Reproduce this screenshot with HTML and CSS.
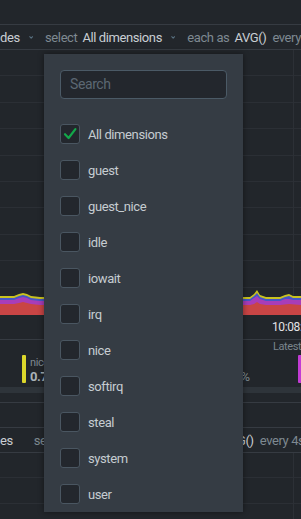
FILE: index.html
```html
<!DOCTYPE html>
<html>
<head>
<meta charset="utf-8">
<link rel="stylesheet" href="styles.css">
</head>
<body>
<div class="page">
  <section class="card">
    <div class="card-head"></div>
    <div class="toolbar">
      <div class="tb-inner">
        <span class="val">des</span>
        <svg class="chev" viewBox="0 0 9 7" width="9" height="7"><path d="M1.5 1.8 L4.5 5 L7.5 1.8" /></svg>
        <span class="kw kw-sel">select</span>
        <span class="val">All dimensions</span>
        <svg class="chev" viewBox="0 0 9 7" width="9" height="7"><path d="M1.5 1.8 L4.5 5 L7.5 1.8" /></svg>
        <span class="kw kw-each">each as</span>
        <span class="val">AVG()</span>
        <span class="kw">every</span>
      </div>
    </div>
    <div class="plot">
      <svg class="area" viewBox="0 0 301 26" width="301" height="26" preserveAspectRatio="none">
        <polygon fill="#c9c31f" points="0,7 14,7 19,5 23,4 27,5 31,7 40,8 60,8 200,8 240,8 250,8 254,5 257,1 260,6 266,8 280,8 285,6 289,5 293,7 301,7 301,26 0,26"/>
        <polygon fill="#4556c8" points="0,9 14,9 19,7 23,6 27,7 31,9 40,10 200,10 250,10 254,7 257,4 260,8 266,10 280,10 285,8 289,7 293,9 301,9 301,26 0,26"/>
        <polygon fill="#a83db8" points="0,11 14,11 19,9 23,8 27,9 31,11 40,12 200,12 250,12 254,9 257,7 260,10 266,12 280,12 285,10 289,10 293,11 301,11 301,26 0,26"/>
        <polygon fill="#c94545" points="0,15 14,15 19,14 23,13 27,14 31,15 40,16 200,16 250,16 254,15 257,13 260,15 266,16 280,16 289,15 301,16 301,26 0,26"/>
      </svg>
    </div>
    <div class="xaxis">10:08:30</div>
    <div class="legend">
      <div class="legend-head">Latest</div>
      <div class="legend-items">
        <div class="item"><span class="bar bar-yellow"></span><div class="item-text"><span class="item-name">nice</span><span class="item-val">0.75<span class="unit">%</span></span></div></div>
        <div class="item"><span class="bar bar-blue"></span><div class="item-text"><span class="item-name">guest</span><span class="item-val">0.21<span class="unit">%</span></span></div></div>
        <div class="item"><span class="bar bar-red"></span><div class="item-text"><span class="item-name">irq</span><span class="item-val">1.32<span class="unit">%</span></span></div></div>
        <div class="item"><span class="bar bar-purple"></span><div class="item-text"><span class="item-name">user</span><span class="item-val">2.1<span class="unit">%</span></span></div></div>
      </div>
    </div>
    <div class="resize"></div>
  </section>

  <section class="card card-second">
    <div class="card-head"></div>
    <div class="toolbar">
      <div class="tb-inner tb-shift">
        <span class="val">des</span>
        <svg class="chev" viewBox="0 0 9 7" width="9" height="7"><path d="M1.5 1.8 L4.5 5 L7.5 1.8" /></svg>
        <span class="kw kw-sel">select</span>
        <span class="val">All dimensions</span>
        <svg class="chev" viewBox="0 0 9 7" width="9" height="7"><path d="M1.5 1.8 L4.5 5 L7.5 1.8" /></svg>
        <span class="kw kw-each">each as</span>
        <span class="val">AVG()</span>
        <span class="kw">every 4s</span>
      </div>
    </div>
    <div class="plot plot-second"></div>
  </section>

  <div class="dropdown">
    <div class="search">Search</div>
    <ul class="options">
      <li class="option"><span class="box checked"><svg viewBox="0 0 20 20" width="20" height="20"><path d="M5 10.2 L8.6 14 L15.4 5.2"/></svg></span><span class="label">All dimensions</span></li>
      <li class="option"><span class="box"></span><span class="label">guest</span></li>
      <li class="option"><span class="box"></span><span class="label">guest_nice</span></li>
      <li class="option"><span class="box"></span><span class="label">idle</span></li>
      <li class="option"><span class="box"></span><span class="label">iowait</span></li>
      <li class="option"><span class="box"></span><span class="label">irq</span></li>
      <li class="option"><span class="box"></span><span class="label">nice</span></li>
      <li class="option"><span class="box"></span><span class="label">softirq</span></li>
      <li class="option"><span class="box"></span><span class="label">steal</span></li>
      <li class="option"><span class="box"></span><span class="label">system</span></li>
      <li class="option"><span class="box"></span><span class="label">user</span></li>
    </ul>
  </div>
</div>
</body>
</html>
```

FILE: styles.css
```css
* { box-sizing: border-box; }
html, body { margin: 0; padding: 0; }
body {
  background: #22262b;
  font-family: Roboto, "Liberation Sans", sans-serif;
  font-size: 13px;
  letter-spacing: -0.4px;
}
.page {
  position: relative;
  width: 301px;
  height: 519px;
  overflow: hidden;
}
.card-head {
  height: 25px;
  border-bottom: 1px solid #363b42;
}
.card-second {
  margin-top: 9px;
  border-top: 1px solid #363b42;
}
.card-second .card-head { height: 25px; }
.toolbar {
  height: 25px;
  border-bottom: 1px solid #363b42;
  overflow: hidden;
  white-space: nowrap;
}
.tb-inner {
  display: flex;
  align-items: center;
  height: 24px;
}
.tb-shift { margin-left: -7px; }
.val { color: #c9ced3; }
.kw { color: #7e8991; margin-left: 6px; }
.kw-sel { margin-left: 12px; }
.kw-each { margin-left: 12px; }
.tb-shift .kw-each { margin-left: 15px; }
.val + .val, .kw + .val { margin-left: 5px; }
.chev {
  margin-left: 9px;
  fill: none;
  stroke: #587080;
  stroke-width: 2.2;
  stroke-linecap: round;
  stroke-linejoin: round;
}
.plot {
  height: 265px;
  display: flex;
  flex-direction: column;
  justify-content: flex-end;
  background:
    linear-gradient(to right, transparent 293px, #2c3036 293px, #2c3036 294px, transparent 294px),
    repeating-linear-gradient(to bottom, transparent 0, transparent 25.4px, #2b2f35 25.4px, #2b2f35 26.4px);
}
.plot-second {
  height: 80px;
  background:
    linear-gradient(to right, transparent 293px, #2c3036 293px, #2c3036 294px, transparent 294px),
    repeating-linear-gradient(to bottom, transparent 0, transparent 24px, #2b2f35 24px, #2b2f35 25px, transparent 25px, transparent 26px);
}
.area { display: block; }
.xaxis {
  height: 25px;
  line-height: 25px;
  padding-left: 272px;
  color: #e2e4e6;
  font-size: 12px;
  white-space: nowrap;
  border-bottom: 1px solid #363b42;
  overflow: hidden;
}
.legend {
  height: 47px;
  overflow: hidden;
}
.legend-head {
  height: 14px;
  line-height: 14px;
  padding-left: 273px;
  color: #7a858d;
  font-size: 11px;
  white-space: nowrap;
  overflow: hidden;
}
.legend-items {
  display: flex;
  padding-left: 22px;
  margin-top: 1px;
  white-space: nowrap;
}
.item {
  display: flex;
  flex: 0 0 92px;
  gap: 4px;
}
.bar {
  width: 4px;
  height: 28px;
  border-radius: 1px;
}
.bar-yellow { background: #dcd72b; }
.bar-blue { background: #4556c8; }
.bar-red { background: #c94545; }
.bar-purple { background: #c23bd4; }
.item-text {
  display: flex;
  flex-direction: column;
  padding-top: 1px;
}
.item-name { color: #7e8991; font-size: 11px; line-height: 13px; }
.item-val { color: #aab2b8; font-weight: 700; font-size: 13px; line-height: 16px; }
.unit { color: #7e8991; font-weight: 400; margin-left: 2px; }
.resize {
  height: 6px;
  background: #2e343a;
}

.dropdown {
  position: absolute;
  left: 44px;
  top: 54px;
  width: 199px;
  height: 458px;
  background: #353c44;
  padding: 16px 16px 0;
  box-shadow: 0 0 6px rgba(0, 0, 0, 0.45);
}
.search {
  height: 29px;
  border: 1px solid #4b5a66;
  border-radius: 4px;
  background: #23272d;
  color: #5c6873;
  font-size: 14px;
  line-height: 27px;
  padding-left: 9px;
  margin-bottom: 17px;
}
.options {
  list-style: none;
  margin: 0;
  padding: 0;
}
.option {
  height: 36px;
  display: flex;
  align-items: center;
  gap: 8px;
}
.box {
  width: 20px;
  height: 20px;
  border: 1px solid #4a5661;
  border-radius: 3px;
  background: #23272d;
  position: relative;
}
.box svg {
  position: absolute;
  left: -1px;
  top: -1px;
  fill: none;
  stroke: #13a84a;
  stroke-width: 2.2;
  stroke-linecap: round;
  stroke-linejoin: round;
}
.label { color: #c6ccd1; }
```
